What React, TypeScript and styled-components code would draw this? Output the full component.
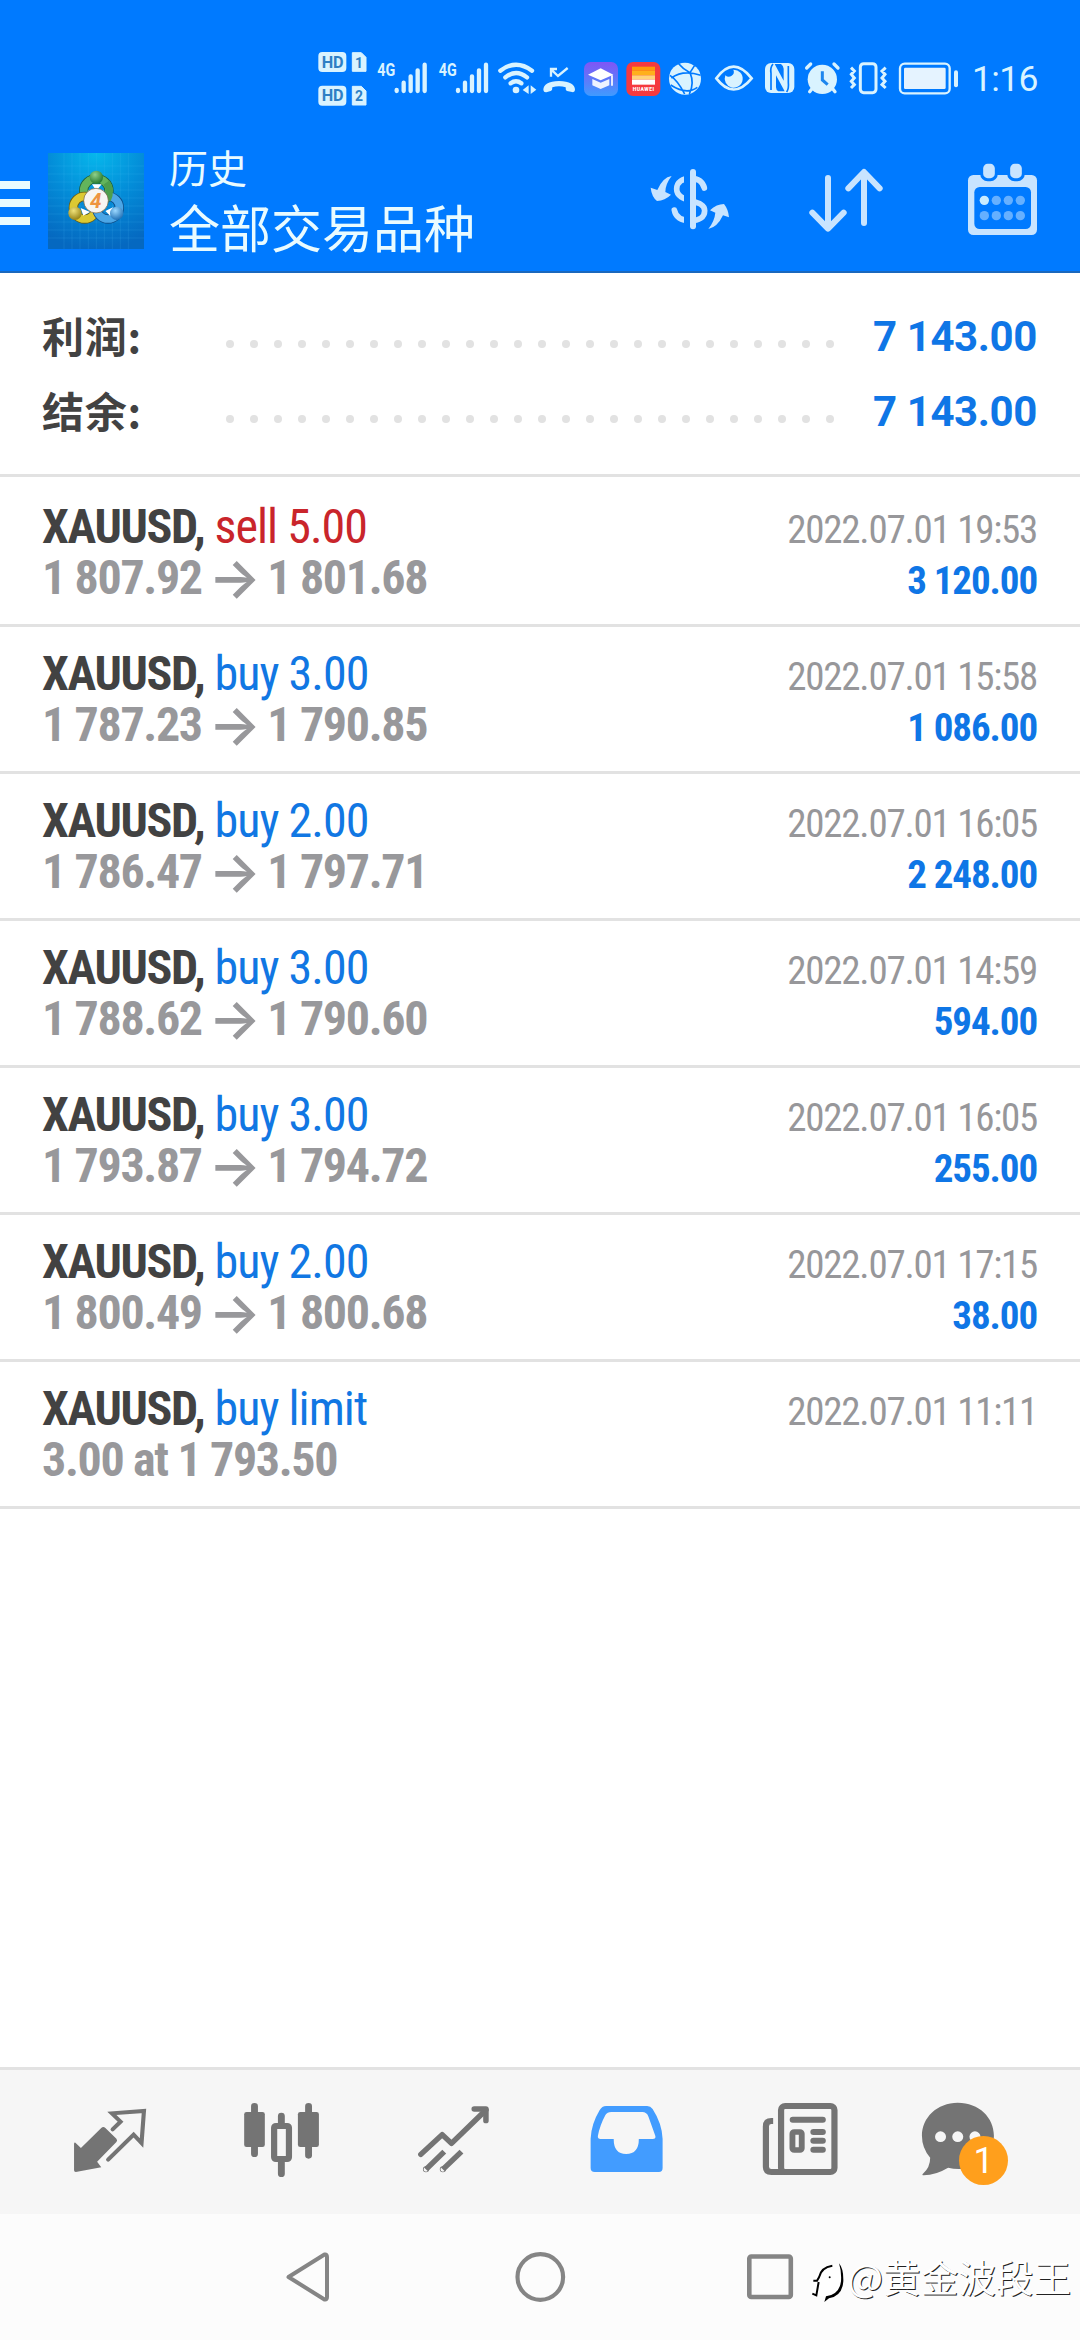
import React from 'react';
import styled, { createGlobalStyle } from 'styled-components';

const BLUE = '#007aff';
const ICE = '#d9f3ff';
const PALE = '#c8e4ff';
const GREY = '#747474';

const GlobalStyle = createGlobalStyle`
  * { box-sizing: border-box; }
  body { margin: 0; background: #fff; }
`;

const Screen = styled.div`
  position: relative;
  display: flex;
  flex-direction: column;
  width: 1080px;
  height: 2340px;
  overflow: hidden;
  background: #fff;
  font-family: Roboto, 'Noto Sans CJK SC', sans-serif;
`;

const Top = styled.header`
  display: flex;
  flex-direction: column;
  height: 273px;
  background: ${BLUE};
  border-bottom: 2px solid #1a68bd;
`;

const StatusBar = styled.div`
  display: flex;
  align-items: center;
  height: 120px;
  padding: 34px 0 0 310px;
`;

const Clock = styled.span`
  margin: 4px 0 0 6px;
  font-size: 35.5px;
  line-height: 40px;
  letter-spacing: -0.7px;
  color: ${ICE};
`;

const Toolbar = styled.div`
  display: flex;
  height: 151px;
`;

const Titles = styled.div`
  display: flex;
  flex-direction: column;
  flex: 1;
  padding: 19px 0 0 19px;
  color: #e9fbff;
  font-family: 'Noto Sans CJK SC', sans-serif;
`;

const Title = styled.span`
  font-size: 39px;
  line-height: 54px;
`;

const Subtitle = styled.span`
  font-size: 51px;
  line-height: 66px;
`;

const Summary = styled.section`
  display: flex;
  flex-direction: column;
  height: 204px;
  padding: 26px 43px 0 42px;
  border-bottom: 3px solid #e2e2e2;
`;

const SummaryRow = styled.div`
  display: flex;
  align-items: center;
  height: 75px;
`;

const SummaryLabel = styled.span`
  width: 184px;
  margin-top: -5px;
  font: 700 42px/75px 'Noto Sans CJK SC', sans-serif;
  letter-spacing: 0.8px;
  color: #424242;
`;

const Dots = styled.div`
  display: flex;
  gap: 16px;
  margin-top: 15px;
`;

const Dot = styled.i`
  width: 8px;
  height: 8px;
  border-radius: 50%;
  background: #e2e2e2;
`;

const SummaryValue = styled.span`
  flex: 1;
  text-align: right;
  font-size: 42px;
  line-height: 75px;
  letter-spacing: -0.4px;
  font-weight: 700;
  color: #0f76e6;
`;

const List = styled.main`
  display: flex;
  flex-direction: column;
  flex: 1;
  padding-top: 3px;
`;

const Row = styled.article`
  display: flex;
  flex-direction: column;
  height: 147px;
  padding: 21px 43px 0 42px;
  border-bottom: 3px solid #e2e2e2;
  font-family: 'Roboto Condensed', Roboto, sans-serif;
  font-stretch: condensed;
`;

const Line = styled.div`
  display: flex;
  align-items: baseline;
  justify-content: space-between;
  height: 51px;
  line-height: 51px;
  white-space: pre;
`;

const Deal = styled.span<{ $color: string }>`
  font-size: 48px;
  letter-spacing: -0.95px;
  color: ${(p) => p.$color};
`;

const Symbol = styled.b`
  letter-spacing: -1.35px;
  color: #424242;
`;

const Price = styled.span`
  font-size: 48px;
  font-weight: 700;
  letter-spacing: -1.35px;
  color: #98989b;
`;

const Arrow = styled.span`
  margin: 0 -2px 0 -3px;
  font-family: Inter, sans-serif;
  font-size: 55px;
  font-weight: 600;
  line-height: 40px;
  vertical-align: -3px;
`;

const Time = styled.span`
  font-size: 39px;
  letter-spacing: -1.25px;
  color: #97979a;
`;

const Profit = styled.span`
  font-size: 39px;
  font-weight: 700;
  letter-spacing: -1.1px;
  color: #0f76e6;
`;

const Tabs = styled.nav`
  display: flex;
  height: 147px;
  padding: 0 24px;
  background: #f6f6f6;
  border-top: 3px solid #e2e2e2;
`;

const Tab = styled.div`
  position: relative;
  width: 172px;
  height: 144px;
`;

const Badge = styled.span`
  position: absolute;
  left: 75px;
  top: 66px;
  width: 49px;
  height: 49px;
  border-radius: 50%;
  background: #ff9f1c;
  color: #fff;
  font-size: 36px;
  line-height: 50px;
  text-align: center;
`;

const SystemBar = styled.footer`
  display: flex;
  align-items: center;
  justify-content: center;
  gap: 170px;
  height: 126px;
  background: #fcfcfc;
`;

const Watermark = styled.div`
  position: absolute;
  right: 9px;
  bottom: 36px;
  display: flex;
  align-items: center;
  color: #fff;
  font: 400 37.6px/56px 'Noto Sans CJK SC', sans-serif;
  text-shadow: 1px 1px 0 #222;
`;

type IconProps = { x: number; y: number; w: number; h: number; children: React.ReactNode };

// Icon artwork is authored in screen coordinates; the view box cuts out its own window.
const Icon = ({ x, y, w, h, children }: IconProps) => (
  <svg width={w} height={h} viewBox={`${x} ${y} ${w} ${h}`} fill="none" style={{ display: 'block', flex: 'none' }}>
    {children}
  </svg>
);

const third = 1 / 3;
const L = `translate(300 30) scale(${third})`;
const R = `translate(680 30) scale(${third})`;
const H = `translate(0 130) scale(${third})`;
const HR = `translate(620 130) scale(${third})`;
const NL = `translate(0 2050) scale(${540 / 1568} ${third})`;
const NR = `translate(540 2050) scale(${540 / 1568} ${third})`;

const HdBadge = ({ y, n }: { y: number; n: string }) => (
  <g>
    <rect x="55" y={y} width="84" height="60" rx="12" fill={ICE} />
    <path d={`M157 ${y + 2}H184L198 ${y + 16}V${y + 58}H157Z`} fill={ICE} stroke={ICE} strokeWidth="3" strokeLinejoin="round" />
    <text x="65" y={y + 47} fontFamily="Roboto" fontWeight="700" fontSize="50" fill="#2f7fc4" textLength="66" lengthAdjust="spacingAndGlyphs">HD</text>
    <text x="165" y={y + 47} fontFamily="Roboto" fontWeight="700" fontSize="46" fill="#2f7fc4" textLength="24" lengthAdjust="spacingAndGlyphs">{n}</text>
  </g>
);

const Signal = ({ x }: { x: number }) => (
  <g>
    <text x={x} y="138" fontFamily="Roboto" fontWeight="700" fontSize="54" fill={ICE} textLength="54" lengthAdjust="spacingAndGlyphs">4G</text>
    <path d={`M${x + 58} 180V183M${x + 79} 158V183M${x + 100} 139V183M${x + 121} 121V183M${x + 142} 104V183`} stroke={ICE} strokeWidth="13" strokeLinecap="round" />
  </g>
);

const StatusIcons = () => (
  <Icon x={310} y={40} w={656} h={74}>
    <defs>
      <linearGradient id="cap" x1="0" y1="0" x2="0" y2="1"><stop stopColor="#8055f5" /><stop offset="1" stopColor="#3f9bff" /></linearGradient>
    </defs>
    <g transform={L}>
      <HdBadge y={66} n="1" />
      <HdBadge y={167} n="2" />
      <Signal x={232} />
      <Signal x={416} />
      <g stroke={ICE} strokeWidth="13" strokeLinecap="round">
        <path d="M601 122Q648 86 696 122" />
        <path d="M616 142Q648 116 681 142" />
        <path d="M632 160Q648 148 664 160" />
      </g>
      <circle cx="648" cy="180" r="10" fill={ICE} />
      <path d="M668 180L686 166V192ZM709 179L692 166V192Z" fill={ICE} />
      <path d="M753 140V117H771M754 119L774 138L803 114" stroke={ICE} strokeWidth="7" />
      <path d="M730 180Q730 154 777 153Q825 154 825 180Q824 188 816 186L801 183Q796 180 797 172Q777 166 757 172Q758 180 752 183L739 187Q731 188 730 180Z" fill={ICE} />
      <rect x="852" y="96" width="102" height="102" rx="20" fill="url(#cap)" />
      <path d="M864 134L902 115L940 134L902 151Z" fill="#fff" />
      <path d="M877 147L902 158L928 147V166L902 177L877 166Z" fill="#eef3ff" />
      <path d="M936 136V167" stroke="#fff" strokeWidth="5" />
      <rect x="979" y="96" width="102" height="102" rx="20" fill="#f53a3f" />
      <path d="M996 110H1065V122H996Z" fill="#ff9a0a" /><path d="M996 122H1065V136H996Z" fill="#ffb01c" />
      <path d="M996 136H1065V149H996Z" fill="#ffd37a" /><path d="M996 149H1065V164H996Z" fill="#fff" />
      <text x="998" y="184" fontFamily="Roboto" fontWeight="900" fontSize="15" fill="#fff" textLength="64">HUAWEI</text>
    </g>
    <g transform={R}>
      <circle cx="15" cy="146" r="48" fill={ICE} />
      <path d="M-30 136Q-6 152 14 192M-26 144Q10 118 62 136M-4 101Q10 118 30 128Q44 160 28 192M30 128L44 106M-28 165Q20 196 52 172" stroke={BLUE} strokeWidth="5" />
      <path d="M109 145Q160 75 215 145Q160 212 109 145Z" stroke={ICE} strokeWidth="8" />
      <path d="M160 119A27 27 0 1 1 136 136A15 15 0 0 0 160 119Z" fill={ICE} />
      <rect x="255" y="99" width="88" height="90" rx="18" fill={ICE} />
      <path d="M279 102Q270 112 273 130V180M320 186Q327 176 325 158V108" stroke={BLUE} strokeWidth="5" />
      <path d="M288 136L314 184H295Q288 180 288 172ZM284 102H303Q311 108 311 116V152Z" fill={BLUE} />
      <circle cx="427" cy="148" r="44" fill={ICE} />
      <path d="M380 114L392 102M462 102L474 114M396 176L389 185M458 176L465 185" stroke={ICE} strokeWidth="10" strokeLinecap="round" />
      <path d="M427 124V150L443 164" stroke="#1c86ee" strokeWidth="9" />
      <rect x="541" y="101" width="47" height="87" rx="10" stroke={ICE} strokeWidth="9" />
      <path d="M513 113L523 123L514 133L523 144L514 154L523 164L513 174M617 113L606 123L615 133L606 144L615 154L606 164L617 174" stroke={ICE} strokeWidth="9" />
      <rect x="660" y="101" width="149" height="89" rx="14" stroke={ICE} strokeWidth="7" />
      <rect x="672" y="113" width="125" height="64" rx="4" fill="#e5f3ff" />
      <rect x="822" y="121" width="12" height="51" rx="6" fill={ICE} />
    </g>
  </Icon>
);

const BrandIcons = () => (
  <Icon x={0} y={120} w={150} h={151}>
    <defs>
      <radialGradient id="sky" cx=".5" cy="0" r="1"><stop stopColor="#06b8ec" /><stop offset=".5" stopColor="#038cd8" /><stop offset="1" stopColor="#0568c0" /></radialGradient>
      <radialGradient id="gb" cx=".4" cy=".3" r=".8"><stop stopColor="#8fd08a" /><stop offset="1" stopColor="#146c22" /></radialGradient>
      <radialGradient id="yb" cx=".4" cy=".3" r=".8"><stop stopColor="#efe27a" /><stop offset="1" stopColor="#8a7608" /></radialGradient>
      <radialGradient id="bb" cx=".4" cy=".3" r=".8"><stop stopColor="#9bd8ff" /><stop offset="1" stopColor="#1163ac" /></radialGradient>
    </defs>
    <g transform={H}>
      <path d="M0 165H90M0 219H90M0 273H90" stroke="#e9fbff" strokeWidth="24" />
      <rect x="144" y="69" width="288" height="288" fill="url(#sky)" />
      <path d="M192 69V357M216 69V357M240 69V357M265 69V357M289 69V357M313 69V357M337 69V357M361 69V357M385 69V357M144 108H432M144 132H432M144 156H432M144 180H432M144 204H432M144 228H432M144 252H432M144 276H432M144 300H432M144 324H432" stroke="#5cc4f5" strokeOpacity=".22" strokeWidth="2" />
      <ellipse cx="289" cy="182" rx="38" ry="36" stroke="#1f5d3a" strokeWidth="28" />
      <ellipse cx="289" cy="182" rx="38" ry="36" stroke="#63b45c" strokeWidth="23" />
      <circle cx="254" cy="233" r="34" stroke="#695d14" strokeWidth="28" />
      <circle cx="254" cy="233" r="34" stroke="#dcc932" strokeWidth="23" />
      <circle cx="324" cy="233" r="34" stroke="#0f4f8a" strokeWidth="28" />
      <circle cx="324" cy="233" r="34" stroke="#4ba6e6" strokeWidth="23" />
      <path d="M319 158Q335 180 322 209" stroke="#4e9e4c" strokeWidth="22" />
      <path d="M276 163L289 182L305 163ZM242 234L250 257L270 246ZM339 232L316 243L331 258Z" fill="#fff" />
      <circle cx="289" cy="142" r="20" fill="url(#gb)" />
      <circle cx="225" cy="250" r="20" fill="url(#yb)" />
      <circle cx="350" cy="250" r="20" fill="url(#bb)" />
      <circle cx="288" cy="212" r="37" fill="#f7f5f2" stroke="#6d5a36" strokeWidth="2" />
      <text x="287" y="234" textAnchor="middle" fontFamily="Roboto" fontWeight="700" fontStyle="italic" fontSize="62" fill="#ee9440">4</text>
    </g>
  </Icon>
);

const ActionIcons = () => (
  <Icon x={630} y={120} w={450} h={151}>
    <g transform={HR} fill={PALE}>
      <path d="M155 138Q128 142 112 180L92 173Q95 200 111 213Q135 212 153 194L136 186Q136 162 155 138Z" />
      <path d="M265 297Q292 292 309 256L327 262Q325 238 312 222Q290 222 270 241L286 248Q284 272 265 297Z" />
      <path d="M253 174C248 153 232 145 212 145C188 145 170 156 170 177C170 201 196 207 215 213C236 219 254 224 254 242C254 262 236 272 212 272C186 272 167 262 163 240" fill="none" stroke={PALE} strokeWidth="17" strokeLinecap="round" />
      <rect x="192" y="125" width="28" height="165" fill={BLUE} />
      <path d="M219 126V289" stroke={PALE} strokeWidth="18" strokeLinecap="round" />
      <path d="M624 144V292M577 248L624 296L671 248M732 279V128M685 175L732 126L779 175" fill="none" stroke={PALE} strokeWidth="18" strokeLinecap="round" strokeLinejoin="round" />
      <rect x="1044" y="135" width="207" height="180" rx="16" />
      <rect x="1063" y="171" width="170" height="126" rx="16" fill={BLUE} />
      <rect x="1085" y="97" width="44" height="52" rx="18" stroke={BLUE} strokeWidth="9" />
      <rect x="1166" y="97" width="44" height="52" rx="18" stroke={BLUE} strokeWidth="9" />
      {[1093, 1129, 1165, 1201].map((cx, i) => (
        <React.Fragment key={cx}>
          <circle cx={cx} cy="211" r="14" fill={i === 0 ? '#c9ecff' : '#66b0ff'} />
          <circle cx={cx} cy="257" r="14" fill="#66b0ff" />
        </React.Fragment>
      ))}
    </g>
  </Icon>
);

const tabArt: React.ReactNode[] = [
  <g transform={NL}>
    <path d="M219 278L235 294L294 234Q300 228 306 234L338 266Q342 271 338 276L282 335L294 352L220 366Q215 366 215 361V281Q216 276 219 278Z" fill={GREY} />
    <path d="M327 238L350 215L325 190L418 183L411 279L388 254L314 329" stroke={GREY} strokeWidth="12" strokeLinecap="round" />
  </g>,
  <g transform={NL}>
    <path d="M739 169V311M896 169V316M817 198V230M817 330V371" stroke={GREY} strokeWidth="20" strokeLinecap="round" />
    <rect x="709" y="186" width="60" height="105" rx="7" fill={GREY} />
    <rect x="865" y="186" width="61" height="105" rx="7" fill={GREY} />
    <rect x="796" y="228" width="43" height="99" rx="5" fill="#f6f6f6" stroke={GREY} strokeWidth="18" />
  </g>,
  <g transform={NL} stroke={GREY} strokeWidth="16" strokeLinejoin="round">
    <path d="M1222 313L1284 254L1311 280L1411 180" strokeLinecap="round" />
    <path d="M1377 177H1411V212" strokeLinecap="round" />
    <path d="M1237 358L1290 305M1286 358L1340 305" />
    <circle cx="1237" cy="358" r="1" /><circle cx="1286" cy="358" r="1" />
  </g>,
  <g transform={NR}>
    <path fillRule="evenodd" fill="#429cff" d="M192 168H311Q321 168 327 177Q354 220 356 266V354Q356 366 345 366H159Q147 366 147 354V266Q149 222 173 181Q180 168 192 168ZM207 186Q195 186 190 195Q174 225 168 258Q167 267 176 267H214Q214 312 250 312Q287 312 287 267H327Q337 267 335 258L315 200Q310 186 297 186Z" />
  </g>,
  <g transform={NR}>
    <path d="M677 213H672Q656 213 656 229V350Q656 366 672 366H715" stroke={GREY} strokeWidth="18" />
    <rect x="700" y="168" width="155" height="198" rx="12" stroke={GREY} strokeWidth="18" />
    <path d="M734 209H821M794 246H821M794 272H821M794 299H821" stroke={GREY} strokeWidth="18" strokeLinecap="round" />
    <rect x="733" y="246" width="27" height="54" rx="5" stroke={GREY} strokeWidth="17" />
  </g>,
  <g transform={NR}>
    <path d="M1213 158C1275 158 1318 203 1318 257C1318 314 1275 357 1216 357Q1200 357 1185 353Q1150 375 1114 376Q1108 375 1112 371Q1133 352 1133 323Q1109 294 1109 257C1109 203 1153 158 1213 158Z" fill={GREY} />
    <g fill="#f6f6f6"><circle cx="1163" cy="260" r="16" /><circle cx="1213" cy="260" r="16" /><circle cx="1263" cy="260" r="16" /></g>
  </g>,
];

const deals = [
  { side: 'sell 5.00', open: '1 807.92', close: '1 801.68', time: '2022.07.01 19:53', profit: '3 120.00' },
  { side: 'buy 3.00', open: '1 787.23', close: '1 790.85', time: '2022.07.01 15:58', profit: '1 086.00' },
  { side: 'buy 2.00', open: '1 786.47', close: '1 797.71', time: '2022.07.01 16:05', profit: '2 248.00' },
  { side: 'buy 3.00', open: '1 788.62', close: '1 790.60', time: '2022.07.01 14:59', profit: '594.00' },
  { side: 'buy 3.00', open: '1 793.87', close: '1 794.72', time: '2022.07.01 16:05', profit: '255.00' },
  { side: 'buy 2.00', open: '1 800.49', close: '1 800.68', time: '2022.07.01 17:15', profit: '38.00' },
  { side: 'buy limit', open: '3.00 at 1 793.50', close: '', time: '2022.07.01 11:11', profit: '' },
];

export default function App() {
  return (
    <Screen>
      <GlobalStyle />
      <Top>
        <StatusBar>
          <StatusIcons />
          <Clock>1:16</Clock>
        </StatusBar>
        <Toolbar>
          <BrandIcons />
          <Titles>
            <Title>历史</Title>
            <Subtitle>全部交易品种</Subtitle>
          </Titles>
          <ActionIcons />
        </Toolbar>
      </Top>
      <Summary>
        {['利润:', '结余:'].map((label) => (
          <SummaryRow key={label}>
            <SummaryLabel>{label}</SummaryLabel>
            <Dots>{Array.from({ length: 26 }, (_, i) => <Dot key={i} />)}</Dots>
            <SummaryValue>7 143.00</SummaryValue>
          </SummaryRow>
        ))}
      </Summary>
      <List>
        {deals.map((d, i) => (
          <Row key={i}>
            <Line>
              <Deal $color={d.side.startsWith('sell') ? '#c9252b' : '#1177e3'}>
                <Symbol>XAUUSD,</Symbol> {d.side}
              </Deal>
              <Time>{d.time}</Time>
            </Line>
            <Line>
              <Price>
                {d.open}
                {d.close && <> <Arrow>→</Arrow> {d.close}</>}
              </Price>
              <Profit>{d.profit}</Profit>
            </Line>
          </Row>
        ))}
      </List>
      <Tabs>
        {tabArt.map((art, i) => (
          <Tab key={i}>
            <Icon x={24 + 172 * i} y={2070} w={172} h={144}>{art}</Icon>
            {i === 5 && <Badge>1</Badge>}
          </Tab>
        ))}
      </Tabs>
      <SystemBar>
        <Icon x={281} y={2247} w={60} h={60}>
          <path d="M289.500 2277L325.500 2254.500Q328 2254 328 2257V2297Q328 2300 325.500 2299.500Z" stroke="#858585" strokeWidth="4" strokeLinejoin="round" />
        </Icon>
        <Icon x={510} y={2247} w={60} h={60}>
          <circle cx="540.300" cy="2277" r="22.800" stroke="#858585" strokeWidth="4.200" />
        </Icon>
        <Icon x={739} y={2247} w={60} h={60}>
          <rect x="748.300" y="2256.500" width="41.500" height="40.500" rx="2" stroke="#858585" strokeWidth="4.600" />
        </Icon>
      </SystemBar>
      <Watermark>
        <Icon x={804} y={2248} w={41} h={56}>
          <g transform={`translate(790 2238) scale(${third})`}>
            <path d="M52 168Q66 140 64 120Q84 76 138 78Q152 110 144 148Q130 172 98 176Z" fill="#fff" />
            <path d="M61 128H72L78 118Q84 88 118 83M77 132L70 172L58 167" stroke="#000" strokeWidth="6" />
            <path d="M138 76Q152 92 151 130Q148 174 108 181L94 192L99 175Q139 170 144 130Q146 100 138 76Z" fill="#000" />
            <circle cx="110" cy="118" r="3" fill="#000" />
          </g>
        </Icon>
        <span>@黄金波段王</span>
      </Watermark>
    </Screen>
  );
}
